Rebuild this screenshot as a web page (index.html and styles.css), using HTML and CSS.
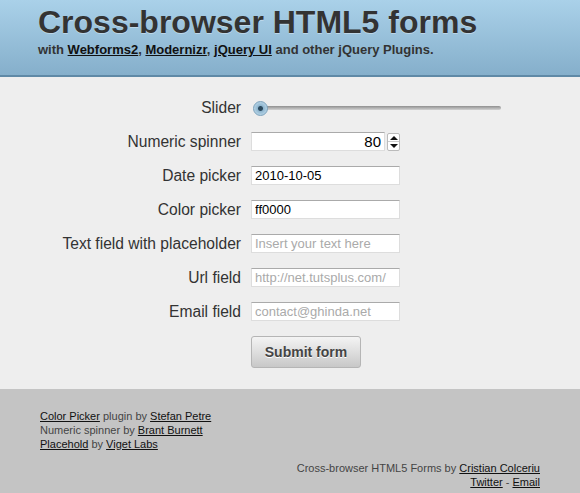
FILE: index.html
```html
<!DOCTYPE html>
<html lang="en">

<head>
  <meta charset="UTF-8" />
  <meta name="viewport" content="width=device-width, initial-scale=1.0" />
  <title>Cross-browser HTML5 forms</title>
  <link rel="stylesheet" href="styles.css">
</head>

<body>
  <header class="header">
    <h1>Cross-browser HTML5 forms</h1>
    <h2>with <a href="#">Webforms2</a>, <a href="#">Modernizr</a>, <a href="#">jQuery UI</a> and other jQuery Plugins.</h2>
  </header>

  <form class="form">
    <div class="row">
      <label>Slider</label>
      <div class="slider">
        <div class="slider-track"></div>
        <span class="slider-handle"></span>
      </div>
    </div>
    <div class="row">
      <label>Numeric spinner</label>
      <div class="spinner">
        <input type="text" class="spinner-input" value="80">
        <div class="spinner-btns">
          <span class="spin-up"></span>
          <span class="spin-down"></span>
        </div>
      </div>
    </div>
    <div class="row">
      <label>Date picker</label>
      <input type="text" value="2010-10-05">
    </div>
    <div class="row">
      <label>Color picker</label>
      <input type="text" value="ff0000">
    </div>
    <div class="row">
      <label>Text field with placeholder</label>
      <input type="text" placeholder="Insert your text here">
    </div>
    <div class="row">
      <label>Url field</label>
      <input type="text" placeholder="http://net.tutsplus.com/">
    </div>
    <div class="row">
      <label>Email field</label>
      <input type="text" placeholder="contact@ghinda.net">
    </div>
    <div class="row">
      <label></label>
      <button type="button" class="submit">Submit form</button>
    </div>
  </form>

  <footer class="footer">
    <p class="credits">
      <a href="#">Color Picker</a> plugin by <a href="#">Stefan Petre</a><br>
      Numeric spinner by <a href="#">Brant Burnett</a><br>
      <a href="#">Placehold</a> by <a href="#">Viget Labs</a>
    </p>
    <p class="author">
      Cross-browser HTML5 Forms by <a href="#">Cristian Colceriu</a><br>
      <a href="#">Twitter</a> - <a href="#">Email</a>
    </p>
  </footer>
</body>

</html>
```

FILE: styles.css
```css
* {
  margin: 0;
  padding: 0;
  box-sizing: border-box;
}

body {
  font-family: "Liberation Sans", Arial, sans-serif;
  color: #333;
  background-color: #eeeeee;
}

a {
  color: #111;
}

/* header */
.header {
  height: 77px;
  padding: 5px 0 0 38px;
  background: linear-gradient(#aad1e9, #85afcb);
  border-bottom: 2px solid #5f89a6;
}

.header h1 {
  font-size: 32px;
  line-height: 34px;
  font-weight: bold;
  color: #333;
  text-shadow: 0 1px 0 rgba(255, 255, 255, .35);
}

.header h2 {
  margin-top: 3px;
  font-size: 13px;
  line-height: 16px;
  font-weight: bold;
  color: #333;
}

/* form */
.form {
  padding: 21px 0 19px;
}

.row {
  display: flex;
  align-items: center;
  height: 19px;
  margin-bottom: 15px;
}

.row label {
  width: 241px;
  text-align: right;
  font-size: 15.6px;
  margin-right: 10px;
  color: #333;
}

.row input {
  width: 149px;
  height: 19px;
  border: 1px solid #ddd;
  border-top-color: #aaa;
  background: #fff;
  font-family: "Liberation Sans", Arial, sans-serif;
  font-size: 13px;
  padding: 0 3px;
  color: #000;
  outline: none;
}

.row input::placeholder {
  color: #aaa;
}

/* slider */
.slider {
  position: relative;
  width: 250px;
  height: 16px;
  display: flex;
  align-items: center;
}

.slider-track {
  margin-left: 6px;
  width: 244px;
  height: 4px;
  border-radius: 2px;
  background: linear-gradient(#8f8f8f, #d2d2d2);
}

.slider-handle {
  position: absolute;
  left: 2px;
  top: 1px;
  width: 15px;
  height: 15px;
  border-radius: 50%;
  border: 1px solid #7aa1bb;
  background: radial-gradient(circle at 50% 50%, #2c4a5e 0, #2c4a5e 2px, #8fb6cf 3px, #b9d6e8 7px);
}

/* spinner */
.spinner {
  display: flex;
  align-items: center;
}

.row .spinner-input {
  width: 134px;
  text-align: right;
  font-size: 15px;
}

.spinner-btns {
  display: flex;
  flex-direction: column;
  width: 13px;
  height: 18px;
  margin-left: 2px;
  border: 1px solid #bbb;
  border-radius: 2px;
  background: #fff;
}

.spin-up,
.spin-down {
  flex: 1;
  position: relative;
}

.spin-up {
  border-bottom: 1px solid #ccc;
}

.spin-up::after,
.spin-down::after {
  content: "";
  position: absolute;
  left: 2px;
  border-left: 4px solid transparent;
  border-right: 4px solid transparent;
}

.spin-up::after {
  top: 2px;
  border-bottom: 4px solid #111;
}

.spin-down::after {
  top: 2px;
  border-top: 4px solid #111;
}

/* submit */
.row .submit {
  width: 110px;
  height: 32px;
  margin-top: 12px;
  border: 1px solid #b5b5b5;
  border-radius: 3px;
  background: linear-gradient(#f4f4f4, #c8c8c8);
  font-family: "Liberation Sans", Arial, sans-serif;
  font-size: 14px;
  font-weight: bold;
  color: #444;
  text-shadow: 0 1px 0 #fff;
}

/* footer */
.footer {
  background-color: #c4c4c4;
  padding: 20px 40px 12px;
  font-size: 11px;
  line-height: 14px;
  color: #444;
}

.author {
  margin-top: 10px;
  text-align: right;
}
```
